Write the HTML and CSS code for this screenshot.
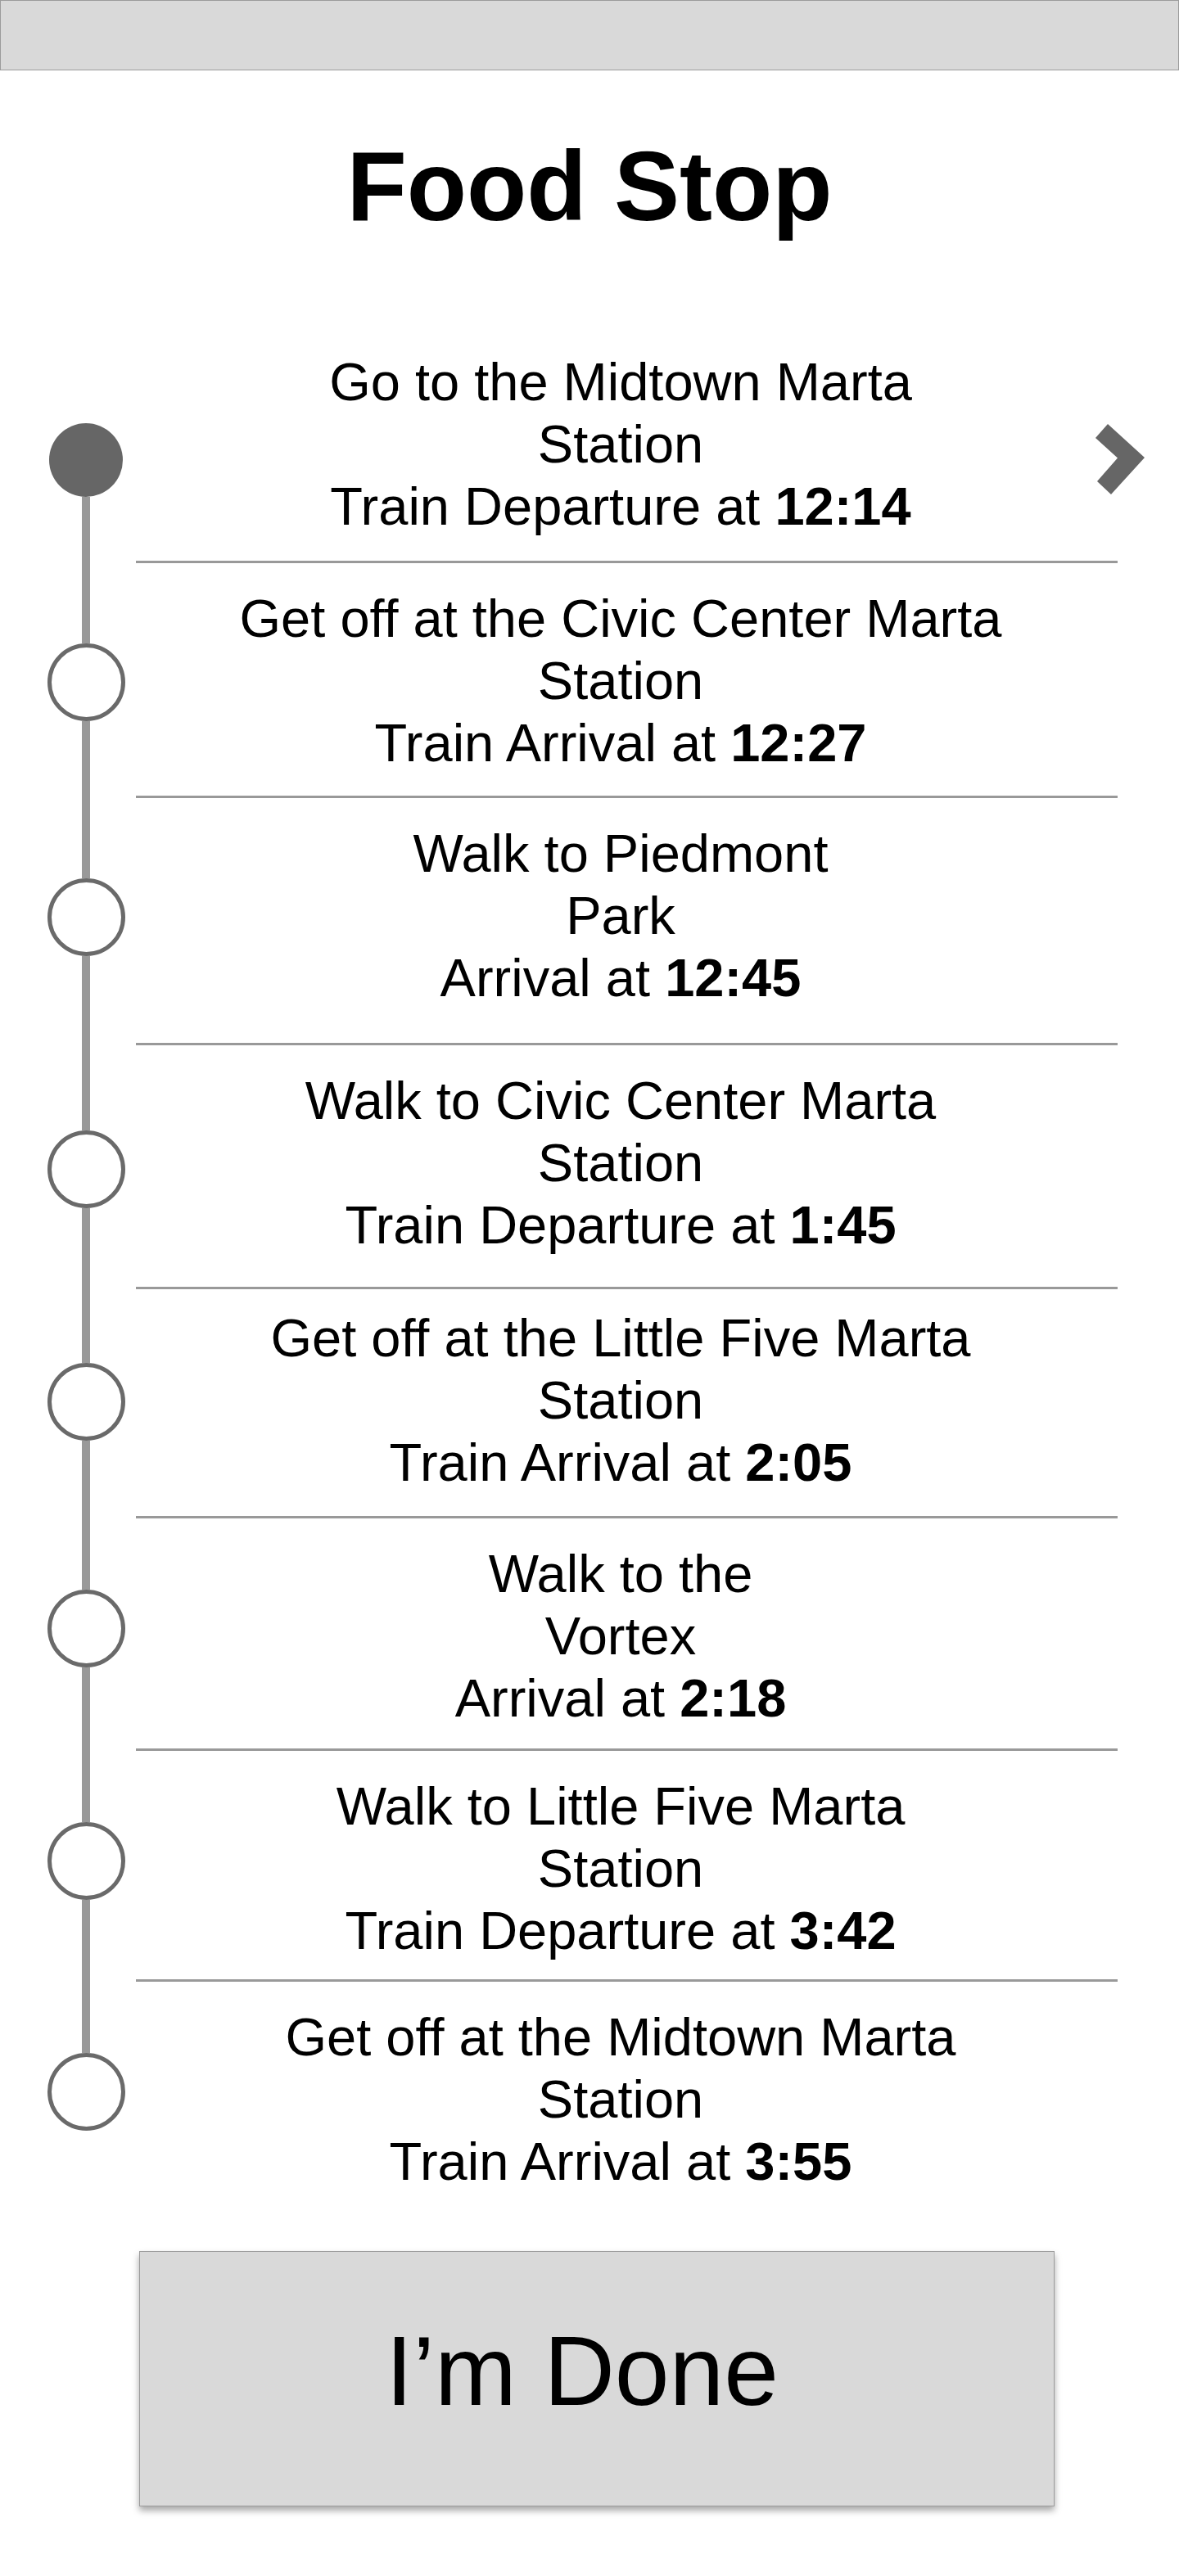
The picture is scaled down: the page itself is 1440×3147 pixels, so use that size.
FILE: index.html
```html
<!DOCTYPE html>
<html lang="en">
<head>
<meta charset="utf-8">
<title>Food Stop</title>
<link rel="stylesheet" href="styles.css">
</head>
<body>
<div class="page">
  <div class="topbar"></div>
  <h1 class="title">Food Stop</h1>

  <ol class="timeline">
    <li class="step">
      <div class="marker">
        <span class="seg seg-top"></span>
        <span class="dot dot--active"></span>
        <span class="seg seg-bottom"></span>
      </div>
      <div class="body">
        <p class="text">Go to the Midtown Marta<br>Station<br>Train Departure at <b>12:14</b></p>
        <div class="rule"></div>
        <svg class="chevron" width="61" height="87" viewBox="0 0 61 87" aria-hidden="true"><polygon points="15,0 60,41 19,86 2,70 27,41.5 0,17" fill="#666"/></svg>
      </div>
    </li>
    <li class="step">
      <div class="marker">
        <span class="seg seg-top"></span>
        <span class="dot"></span>
        <span class="seg seg-bottom"></span>
      </div>
      <div class="body">
        <p class="text">Get off at the Civic Center Marta<br>Station<br>Train Arrival at <b>12:27</b></p>
        <div class="rule"></div>
      </div>
    </li>
    <li class="step">
      <div class="marker">
        <span class="seg seg-top"></span>
        <span class="dot"></span>
        <span class="seg seg-bottom"></span>
      </div>
      <div class="body">
        <p class="text">Walk to Piedmont<br>Park<br>Arrival at <b>12:45</b></p>
        <div class="rule"></div>
      </div>
    </li>
    <li class="step">
      <div class="marker">
        <span class="seg seg-top"></span>
        <span class="dot"></span>
        <span class="seg seg-bottom"></span>
      </div>
      <div class="body">
        <p class="text">Walk to Civic Center Marta<br>Station<br>Train Departure at <b>1:45</b></p>
        <div class="rule"></div>
      </div>
    </li>
    <li class="step">
      <div class="marker">
        <span class="seg seg-top"></span>
        <span class="dot"></span>
        <span class="seg seg-bottom"></span>
      </div>
      <div class="body">
        <p class="text">Get off at the Little Five Marta<br>Station<br>Train Arrival at <b>2:05</b></p>
        <div class="rule"></div>
      </div>
    </li>
    <li class="step">
      <div class="marker">
        <span class="seg seg-top"></span>
        <span class="dot"></span>
        <span class="seg seg-bottom"></span>
      </div>
      <div class="body">
        <p class="text">Walk to the<br>Vortex<br>Arrival at <b>2:18</b></p>
        <div class="rule"></div>
      </div>
    </li>
    <li class="step">
      <div class="marker">
        <span class="seg seg-top"></span>
        <span class="dot"></span>
        <span class="seg seg-bottom"></span>
      </div>
      <div class="body">
        <p class="text">Walk to Little Five Marta<br>Station<br>Train Departure at <b>3:42</b></p>
        <div class="rule"></div>
      </div>
    </li>
    <li class="step">
      <div class="marker">
        <span class="seg seg-top"></span>
        <span class="dot"></span>
        <span class="seg seg-bottom"></span>
      </div>
      <div class="body">
        <p class="text">Get off at the Midtown Marta<br>Station<br>Train Arrival at <b>3:55</b></p>
      </div>
    </li>
  </ol>

  <button class="done-btn" type="button">I’m Done</button>
</div>
</body>
</html>
```

FILE: styles.css
```css
html, body {
  margin: 0;
  padding: 0;
  background: #fff;
}

body {
  font-family: "Liberation Sans", Arial, Helvetica, sans-serif;
  color: #000;
}

.page {
  width: 1440px;
  min-height: 3147px;
  display: flex;
  flex-direction: column;
}

.topbar {
  height: 86px;
  box-sizing: border-box;
  background: #d9d9d9;
  border: 1px solid #9b9b9b;
}

.title {
  margin: 72px 0 0;
  font-size: 120px;
  line-height: 138px;
  font-weight: 700;
  text-align: center;
}

.timeline {
  list-style: none;
  margin: 103px 0 0;
  padding: 0 0 0 57px;
}

.step {
  display: flex;
  align-items: stretch;
}

.marker {
  width: 96px;
  flex: 0 0 96px;
  display: flex;
  flex-direction: column;
  align-items: center;
}

.seg {
  width: 10px;
  background: #999;
}

.seg-top {
  flex: 0 0 98px;
}

.seg-bottom {
  flex: 1 1 0;
}

.step:first-child .seg-top {
  flex: 0 0 118px;
  visibility: hidden;
}

.step:nth-child(4) .seg-top { flex-basis: 104px; }
.step:nth-child(5) .seg-top { flex-basis: 90px; }
.step:nth-child(6) .seg-top,
.step:nth-child(7) .seg-top,
.step:nth-child(8) .seg-top { flex-basis: 87px; }

.step:last-child .seg-bottom {
  visibility: hidden;
}

.dot {
  flex: 0 0 auto;
  width: 95px;
  height: 95px;
  box-sizing: border-box;
  border: 5px solid #6a6a6a;
  border-radius: 50%;
  background: #fff;
}

.dot--active {
  width: 90px;
  height: 90px;
  border: none;
  background: #666;
}

.body {
  position: relative;
  flex: 1 1 auto;
  margin: 0 75px 0 13px;
}

.text {
  margin: 0;
  padding: 30px 15px 28px 0;
  font-size: 65px;
  line-height: 76px;
  text-align: center;
}

.text b {
  font-weight: 700;
}

.step:nth-child(2) .text { padding-bottom: 26px; }
.step:nth-child(3) .text { padding-bottom: 41px; }
.step:nth-child(4) .text { padding-bottom: 37px; }
.step:nth-child(5) .text { padding-top: 22px; padding-bottom: 27px; }
.step:nth-child(6) .text { padding-bottom: 23px; }
.step:nth-child(7) .text { padding-bottom: 21px; }
.step:nth-child(8) .text { padding-bottom: 12px; }

.rule {
  height: 3px;
  background: #999;
}

.chevron {
  position: absolute;
  top: 119px;
  right: -34px;
  display: block;
}

.done-btn {
  margin: 59px 0 0 170px;
  width: 1118px;
  height: 312px;
  box-sizing: border-box;
  border: 1px solid #9b9b9b;
  background: #d9d9d9;
  box-shadow: 0 5px 8px rgba(0, 0, 0, 0.35);
  font-family: "Liberation Sans", Arial, Helvetica, sans-serif;
  font-size: 120px;
  line-height: 138px;
  color: #000;
  display: flex;
  align-items: center;
  justify-content: center;
  padding: 0 36px 20px 0;
  cursor: pointer;
}
```
